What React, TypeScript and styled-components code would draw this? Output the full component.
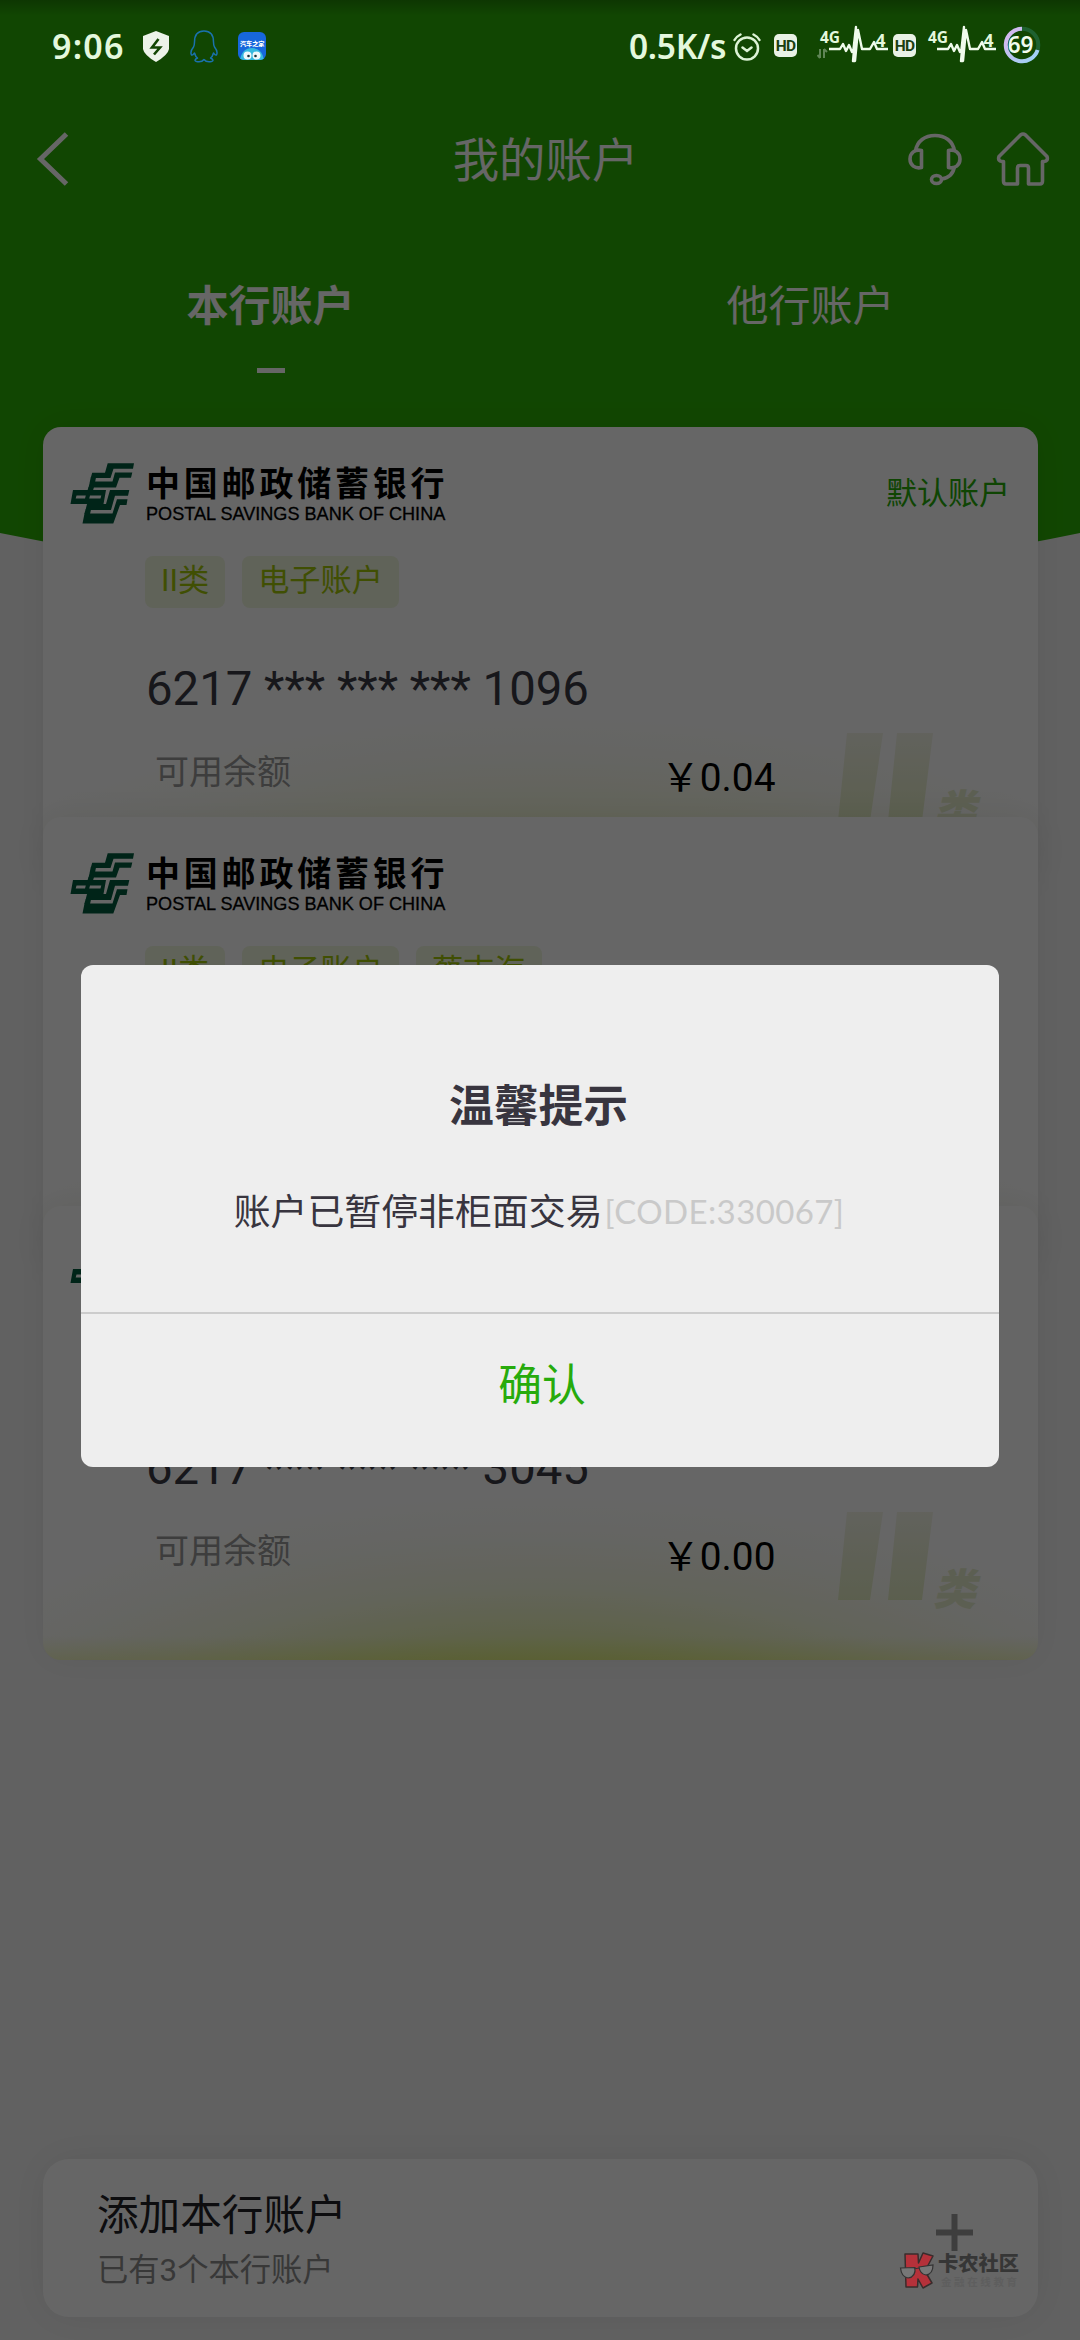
import React from 'react';
import styled, { createGlobalStyle } from 'styled-components';

const CJK = '"Noto Sans CJK SC", sans-serif';
const LATIN = 'Roboto, "Noto Sans CJK SC", sans-serif';

const GlobalStyle = createGlobalStyle`
  * { box-sizing: border-box; }
  body { margin: 0; background: #616161; font-family: ${CJK}; }
`;

const Page = styled.div`
  position: relative;
  isolation: isolate;
  display: flex;
  flex-direction: column;
  width: 1080px;
  height: 2340px;
  overflow: hidden;
  background: #f3f3f3;
`;

const Backdrop = styled.svg`
  position: absolute;
  inset: 0;
  z-index: -1;
`;

/* ---- status bar ---- */
const StatusBar = styled.div`
  position: relative;
  z-index: 3;
  display: flex;
  align-items: flex-start;
  height: 90px;
  padding: 0 39px 0 52px;
  background: linear-gradient(rgba(0, 0, 0, 0.22), transparent 16px);
  color: #e4f8dd;
  font-family: "Noto Sans", sans-serif;
  white-space: nowrap;
`;

const Clock = styled.div`
  width: 91px;
  font-size: 34px;
  font-weight: 600;
  line-height: 46px;
  letter-spacing: 1.2px;
  padding-top: 23px;
`;

const Speed = styled.div`
  width: 104px;
  padding-top: 23px;
  font-size: 33.5px;
  font-weight: 600;
  line-height: 46px;
  letter-spacing: -0.3px;
`;

const Spacer = styled.div`
  flex: 1;
`;

const Glyph = styled.svg<{ $gap?: number; $top?: number }>`
  flex: none;
  display: block;
  margin-top: ${(p) => p.$top ?? 0}px;
  margin-right: ${(p) => p.$gap ?? 0}px;
`;

const HdBadge = styled.div<{ $gap: number }>`
  flex: none;
  width: 23px;
  height: 23px;
  margin: 34px ${(p) => p.$gap}px 0 0;
  border-radius: 5px;
  background: #e9f2e6;
  color: #1b3f10;
  font-family: Roboto, sans-serif;
  font-size: 15.5px;
  font-weight: 700;
  line-height: 24px;
  letter-spacing: -0.8px;
  text-align: center;
`;

/* ---- header ---- */
const Header = styled.header`
  display: grid;
  grid-template-columns: 1fr auto 1fr;
  align-items: center;
  height: 138px;
  padding: 0 30px 0 36px;
`;

const Title = styled.h1`
  margin: -4px 0 0 5px;
  color: #fff;
  font-size: 46.4px;
  font-weight: 400;
  line-height: 60px;
`;

const Actions = styled.div`
  display: flex;
  justify-content: flex-end;
  gap: 34px;
`;

const Tabs = styled.nav`
  display: grid;
  grid-template-columns: 1fr 1fr;
  height: 199px;
`;

const Tab = styled.div<{ $active?: boolean }>`
  display: flex;
  flex-direction: column;
  align-items: center;
  padding: 45px 0 0 1px;
  color: #fff;
  font-size: 42px;
  font-weight: ${(p) => (p.$active ? 700 : 400)};
  line-height: 60px;
  &::after {
    content: "";
    width: 28px;
    height: 5px;
    margin-top: 35px;
    background: ${(p) => (p.$active ? '#fff' : 'transparent')};
  }
`;

/* ---- account cards ---- */
const CardList = styled.main`
  display: flex;
  flex-direction: column;
  padding: 0 42px 0 43px;
`;

const Card = styled.section`
  position: relative;
  height: 454px;
  padding: 29px 28px 0 27px;
  border-radius: 18px;
  box-shadow: 0 0 34px rgba(0, 0, 0, 0.06);
  background:
    linear-gradient(to top, rgba(215, 230, 60, 0.24), transparent 24px),
    radial-gradient(ellipse 740px 350px at 50% 140%, rgba(212, 236, 90, 0.6) 52%, rgba(212, 234, 100, 0.4) 62%, rgba(214, 230, 120, 0.22) 73%, rgba(216, 226, 150, 0.09) 87%, rgba(220, 225, 170, 0) 100%),
    #fff;
  & + & { margin-top: -64.5px; }
`;

const CardTop = styled.div`
  display: flex;
  align-items: flex-start;
  height: 100px;
`;

const BankNames = styled.div`
  margin-left: 11px;
  color: #000;
  white-space: nowrap;
`;

const BankName = styled.div`
  font-size: 34px;
  font-weight: 700;
  line-height: 46px;
  height: 48px;
  padding-top: 3px;
  letter-spacing: 3.8px;
`;

const BankNameEn = styled.div`
  font-family: "Liberation Sans", Arial, sans-serif;
  font-size: 18.1px;
  line-height: 20px;
  -webkit-text-stroke: 0.3px #000;
`;

const DefaultLabel = styled.div`
  margin-left: auto;
  padding-top: 13px;
  color: #27ac08;
  font-size: 31px;
  line-height: 44px;
`;

const Tags = styled.div`
  display: flex;
  gap: 17px;
  padding-left: 75px;
`;

const Tag = styled.span`
  height: 52px;
  padding: 0 16px;
  border-radius: 8px;
  background: #f0f7de;
  color: #a0c508;
  font-family: ${LATIN};
  font-size: 31.2px;
  line-height: 50px;
`;

const CardNumber = styled.div`
  padding: 51px 0 0 76px;
  color: #3b3b45;
  font-family: Roboto, sans-serif;
  font-size: 47.3px;
  line-height: 60px;
`;

const Balance = styled.div`
  display: flex;
  padding: 28px 0 0 85px;
`;

const BalanceLabel = styled.div`
  width: 506px;
  color: #999;
  font-size: 34px;
  line-height: 46px;
`;

const Amount = styled.div`
  padding-top: 8px;
  color: #000;
  font-family: ${LATIN};
  font-size: 38.8px;
  line-height: 46px;
`;

const ClassMark = styled.svg`
  position: absolute;
  right: 32px;
  bottom: 28px;
`;

/* ---- add account ---- */
const AddCard = styled.footer`
  display: flex;
  justify-content: space-between;
  height: 158px;
  margin: auto 42px 23px 43px;
  padding: 30px 17px 0 54px;
  border-radius: 26px;
  background: #fff;
  box-shadow: 0 0 40px rgba(0, 0, 0, 0.07);
`;

const AddTitle = styled.div`
  color: #222226;
  font-size: 41.6px;
  line-height: 46px;
`;

const AddHint = styled.div`
  margin-top: 16px;
  color: #8c8c8c;
  font-family: ${LATIN};
  font-size: 31.3px;
  line-height: 40px;
`;

/* ---- dialog ---- */
const Mask = styled.div`
  position: absolute;
  inset: 0;
  z-index: 2;
  padding: 965px 81px 0;
  background: rgba(0, 0, 0, 0.6);
`;

const Dialog = styled.div`
  display: flex;
  flex-direction: column;
  width: 918px;
  height: 502px;
  border-radius: 12px;
  overflow: hidden;
  background: #eee;
  text-align: center;
`;

const DialogTitle = styled.h2`
  margin: 108px 3px 0 0;
  color: #38353f;
  font-size: 44.8px;
  font-weight: 700;
  line-height: 60px;
`;

const DialogText = styled.p`
  display: flex;
  justify-content: center;
  gap: 2px;
  margin: 49px 0 0;
  padding-right: 2px;
  color: #38353f;
  font-size: 36.9px;
  line-height: 54px;
  white-space: nowrap;
`;

const Code = styled.span`
  padding-top: 2px;
  color: #c9c9c9;
  font-family: Lato, sans-serif;
  font-size: 33px;
  letter-spacing: 0.4px;
`;

const Confirm = styled.button`
  height: 155px;
  margin-top: auto;
  border: 0;
  border-top: 2px solid #ccc;
  background: none;
  color: #27ab0c;
  font-family: ${CJK};
  font-size: 43.8px;
  line-height: 60px;
  padding: 0 0 17px 4px;
`;

/* ---- community watermark ---- */
const Watermark = styled.div`
  position: absolute;
  z-index: 4;
  left: 899px;
  top: 2251px;
  display: flex;
  gap: 3px;
`;

const MarkName = styled.div`
  color: #363636;
  font-size: 20.3px;
  font-weight: 900;
  line-height: 22px;
  height: 25px;
  white-space: nowrap;
`;

const MarkSlogan = styled.div`
  padding-left: 3px;
  color: #5e5e5e;
  font-size: 10.5px;
  font-weight: 700;
  line-height: 11px;
  letter-spacing: 2.6px;
  white-space: nowrap;
`;

const PulseSignal = ({ gap, data }: { gap: number; data?: boolean }) => (
  <Glyph width="72" height="42" viewBox="0 0 72 42" $top={23} $gap={gap} fill="none">
    <text x="3" y="20" fill="#e4f8dd" fontFamily="Noto Sans, sans-serif" fontSize="15.5" fontWeight="700">4G</text>
    {data && (
      <path d="M3 26v9M0.5 32l2.5 3M7 35v-9M7 26l3 3" stroke="#5f8556" strokeWidth="2" />
    )}
    <path
      d="M12 26H23l3-5 3 7 3-6 3 7 1.500-3L39 4l-3 34h2L41 7l4 19h8l4-7 3 7h11"
      stroke="#f0fbec" strokeWidth="2.400" strokeLinejoin="round"
    />
    <text x="58.500" y="24" fill="#e4f8dd" fontFamily="Noto Sans, sans-serif" fontSize="17.5" fontWeight="700">4</text>
  </Glyph>
);

const BankLogo = () => (
  <Glyph width="65" height="63" viewBox="0 0 65 63" $top={6}>
    <g fill="#005a3c">
      <path d="M37.700 1.300H64L63 6.700H43.500L40.500 16H20.700L22.200 10.700H35Z" />
      <path d="M45 10.500H62.300L61 15.700H49.500L46 25.500H18.500L20 19.500H42.500Z" />
      <path d="M20.700 15.500H26L25 20.500H19.700ZM18.500 25H24L23 28.500H17.500Z" />
      <path fillRule="evenodd" d="M3 28H36L33.500 42H0.500ZM6.500 33.400L5.700 36.600H15L15.800 33.400ZM20 33.400L19.200 36.600H30.500L31.300 33.400Z" />
      <path d="M40 28H59.300L58 33.700H45L41 48H15.500L17 42H36Z" />
      <path d="M47 37.300H57.500L56.500 43H50L43.300 61.500H12.500L14.500 51.500H42.500Z" />
      <path d="M15.500 47.500H21L20 52H14.300Z" />
    </g>
  </Glyph>
);

interface AccountProps {
  tags: string[];
  number: string;
  amount: string;
  isDefault?: boolean;
}

const Account = ({ tags, number, amount, isDefault }: AccountProps) => (
  <Card>
    <ClassMark width="170" height="120" viewBox="0 0 170 120">
      <defs>
        <linearGradient id="fade" x1="0" y1="0" x2="0" y2="1">
          <stop offset="0" stopColor="#f4f5e8" />
          <stop offset="1" stopColor="#e4edc4" />
        </linearGradient>
      </defs>
      <path d="M11 0H47L34 88H2Z M61 0H97L86 88H52Z" fill="url(#fade)" />
      <text x="97" y="93" fill="#e7eecd" fontSize="43" fontWeight="900" fontStyle="italic">类</text>
    </ClassMark>
    <CardTop>
      <BankLogo />
      <BankNames>
        <BankName>中国邮政储蓄银行</BankName>
        <BankNameEn>POSTAL SAVINGS BANK OF CHINA</BankNameEn>
      </BankNames>
      {isDefault && <DefaultLabel>默认账户</DefaultLabel>}
    </CardTop>
    <Tags>
      {tags.map((t) => (
        <Tag key={t}>{t}</Tag>
      ))}
    </Tags>
    <CardNumber>{number}</CardNumber>
    <Balance>
      <BalanceLabel>可用余额</BalanceLabel>
      <Amount>￥{amount}</Amount>
    </Balance>
  </Card>
);

const accounts: AccountProps[] = [
  { tags: ['II类', '电子账户'], number: '6217 *** *** *** 1096', amount: '0.04', isDefault: true },
  { tags: ['II类', '电子账户', '蔡志海'], number: '6217 *** *** ***', amount: '0.00' },
  { tags: ['II类', '电子账户'], number: '6217 *** *** *** 3045', amount: '0.00' },
];

export default function App() {
  return (
    <>
      <GlobalStyle />
      <Page>
        <Backdrop width="1080" height="650" viewBox="0 0 1080 650">
          <path d="M0 0H1080V533Q540 645 0 533Z" fill="#2caf05" />
        </Backdrop>

        <StatusBar>
          <Clock>9:06</Clock>
          <Glyph width="26" height="31" viewBox="0 0 26 31" $top={31} $gap={21}>
            <path d="M13 0L26 5V18Q25 24 13 31Q1 24 0 18V5Z" fill="#ecf3e9" />
            <path d="M15.500 8L9 16.500H17L11 23.500" fill="none" stroke="#124603" strokeWidth="2.600" />
          </Glyph>
          <Glyph width="28" height="33" viewBox="0 0 28 33" $top={30} $gap={20} fill="none" stroke="#1a72ae" strokeWidth="1.500" strokeLinejoin="round">
            <path d="M14 1C7 1 4.500 6 4.500 12C4.500 14 4.500 15 3.500 17C1 20 0.500 23 1.500 25C2.500 25.500 3.500 24 4.500 23C5 25 6 27 7.500 28C5 29 4 31 6.500 31.500C9 32 12.500 31.500 14 29.500C15.500 31.500 19 32 21.500 31.500C24 31 23 29 20.500 28C22 27 23 25 23.500 23C24.500 24 25.500 25.500 26.500 25C27.500 23 27 20 24.500 17C23.500 15 23.500 14 23.500 12C23.500 6 21 1 14 1Z" />
          </Glyph>
          <Glyph width="28" height="28" viewBox="0 0 28 28" $top={32}>
            <defs>
              <clipPath id="appShape"><rect width="28" height="28" rx="6" /></clipPath>
            </defs>
            <g clipPath="url(#appShape)">
              <rect width="28" height="28" fill="#1767dc" />
              <path d="M2 28Q4 16 14 16Q24 16 26 28Z" fill="#35b9df" />
              <circle cx="9.500" cy="23.500" r="4" fill="#eef8fa" />
              <circle cx="18.500" cy="23.500" r="4" fill="#eef8fa" />
              <circle cx="10.500" cy="24" r="1.300" fill="#18323c" />
              <circle cx="17.500" cy="24" r="1.300" fill="#18323c" />
              <text x="2" y="13.500" fontSize="6.100" fontWeight="900" fill="#fff" fontFamily="Noto Sans CJK SC">汽车之家</text>
            </g>
          </Glyph>
          <Spacer />
          <Speed>0.5K/s</Speed>
          <Glyph width="28" height="28" viewBox="0 0 28 28" $top={33} $gap={13} fill="none" stroke="#dcf2d5" strokeWidth="2.500" strokeLinecap="round">
            <circle cx="14" cy="15.500" r="11" />
            <path d="M1.500 7Q3.500 3.500 7.500 1.500M26.500 7Q24.500 3.500 20.500 1.500M9.500 14.500L14 18L18.500 14.500" />
          </Glyph>
          <HdBadge $gap={20}>HD</HdBadge>
          <PulseSignal gap={4} data />
          <HdBadge $gap={9}>HD</HdBadge>
          <PulseSignal gap={6} />
          <Glyph width="38" height="38" viewBox="0 0 38 38" $top={26} fill="none">
            <defs>
              <linearGradient id="ring" x1="0" y1="0" x2="1" y2="1">
                <stop offset="0" stopColor="#dcb4ee" />
                <stop offset="1" stopColor="#9ad3f5" />
              </linearGradient>
            </defs>
            <circle cx="19" cy="19" r="16.300" stroke="#1f6130" strokeWidth="4" />
            <path d="M19 2.700A16.300 16.300 0 1 0 34.600 24" stroke="url(#ring)" strokeWidth="4" />
            <text x="17.500" y="27" textAnchor="middle" fill="#f1fbee" fontFamily="Noto Sans, sans-serif" fontSize="22.5" fontWeight="600">69</text>
          </Glyph>
        </StatusBar>

        <Header>
          <Glyph width="34" height="56" viewBox="0 0 34 56" fill="none" stroke="#fff" strokeWidth="5">
            <path d="M30.500 3L4.500 28L30.500 53" />
          </Glyph>
          <Title>我的账户</Title>
          <Actions>
            <Glyph width="54" height="54" viewBox="0 0 54 54" fill="none" stroke="#fff" strokeWidth="3.600" strokeLinejoin="round">
              <path d="M7.500 19C9 9 17 3.500 27 3.500S45 9 46.500 19" />
              <path d="M13.500 18.500V35.500C7 37 2 33 2 27C2 21 7 17 13.500 18.500ZM40.500 18.500V35.500C47 37 52 33 52 27C52 21 47 17 40.500 18.500Z" />
              <path d="M46.500 34C45.500 42 40 46 33.500 47" />
              <ellipse cx="28.500" cy="47.500" rx="5" ry="4" />
            </Glyph>
            <Glyph width="54" height="54" viewBox="0 0 54 54" fill="none" stroke="#fff" strokeWidth="3.600" strokeLinejoin="round">
              <path d="M24.500 3Q27 1 29.500 3L51 24.500Q52.500 29 48 29.500H46.500V49Q46.500 52 44 52H32.500V36Q32.500 33.500 30 33.500H24Q21.500 33.500 21.500 36V52H10Q7.500 52 7.500 49V29.500H6Q1.500 29 3 24.500Z" />
            </Glyph>
          </Actions>
        </Header>

        <Tabs>
          <Tab $active>本行账户</Tab>
          <Tab>他行账户</Tab>
        </Tabs>

        <CardList>
          {accounts.map((a, i) => (
            <Account key={i} {...a} />
          ))}
        </CardList>

        <AddCard>
          <div>
            <AddTitle>添加本行账户</AddTitle>
            <AddHint>已有3个本行账户</AddHint>
          </div>
          <Glyph width="37" height="37" viewBox="0 0 37 37" $top={25} $gap={48} stroke="#9c9c9c" strokeWidth="6">
            <path d="M18.500 0V37M0 18.500H37" />
          </Glyph>
        </AddCard>

        <Mask>
          <Dialog>
            <DialogTitle>温馨提示</DialogTitle>
            <DialogText>
              账户已暂停非柜面交易<Code>[CODE:330067]</Code>
            </DialogText>
            <Confirm>确认</Confirm>
          </Dialog>
        </Mask>

        <Watermark>
          <svg width="36" height="38" viewBox="0 0 36 38">
            <path
              d="M6 3H19L19.500 12L24 2L34 5L26 20L33 32L24 37L19 28L18.500 36H7Z"
              fill="#b5313a" stroke="#3a2c2c" strokeWidth="1.500" strokeLinejoin="round"
            />
            <path d="M1.500 17L16 16.500Q17 26 9 27Q2.500 26 1.500 17ZM20 16L34 14Q34 23 27 24Q21 23 20 16ZM15 18L20 17" fill="#777" stroke="#333" strokeWidth="1.200" />
          </svg>
          <div>
            <MarkName>卡农社区</MarkName>
            <MarkSlogan>金融在线教育</MarkSlogan>
          </div>
        </Watermark>
      </Page>
    </>
  );
}
